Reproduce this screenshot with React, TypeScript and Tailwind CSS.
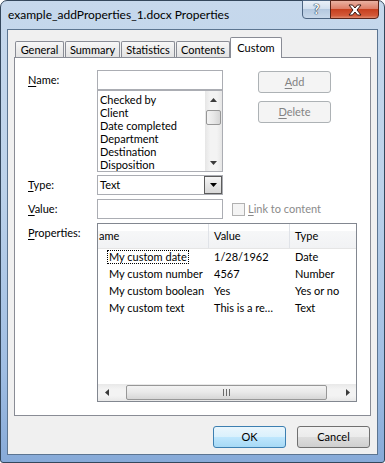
import React from "react";

// ---------- small bits ----------
function Mn({ c }: { c: string }) {
  return <span className="underline decoration-1 underline-offset-[2px]">{c}</span>;
}

function Label({ children }: { children: React.ReactNode }) {
  return <div className="w-[69px] shrink-0 pt-[2px] leading-[16px]">{children}</div>;
}

function UpArrow() {
  return (
    <svg width="7" height="4" viewBox="0 0 7 4">
      <path d="M0 4 L3.5 0 L7 4 Z" fill="#3b3b3b" />
    </svg>
  );
}

function DownArrow({ color = "#3b3b3b" }: { color?: string }) {
  return (
    <svg width="7" height="4" viewBox="0 0 7 4">
      <path d="M0 0 L7 0 L3.5 4 Z" fill={color} />
    </svg>
  );
}

function LeftArrow() {
  return (
    <svg width="4" height="7" viewBox="0 0 4 7">
      <path d="M4 0 L4 7 L0 3.5 Z" fill="#3b3b3b" />
    </svg>
  );
}

function RightArrow() {
  return (
    <svg width="4" height="7" viewBox="0 0 4 7">
      <path d="M0 0 L4 3.5 L0 7 Z" fill="#3b3b3b" />
    </svg>
  );
}

// ---------- title bar ----------
function TitleBar() {
  return (
    <div className="h-[28px] flex items-start justify-between">
      <div className="pl-[1px] pt-[6px] leading-[16px] text-[12px] text-black">
        example_addProperties_1.docx Properties
      </div>
      <div className="flex -mt-px -mr-px">
        <div className="w-[29px] h-[19px] rounded-bl-[4px] border border-[#4d6582] bg-[linear-gradient(180deg,#e9f0f8_0%,#d3e0ef_45%,#b4c8df_50%,#c8d8ea_100%)] flex items-center justify-center">
          <span className="font-bold text-[13px] leading-none text-white [text-shadow:0_0_1px_#22344a,0_0_1px_#22344a,0_0_1px_#22344a]">
            ?
          </span>
        </div>
        <div className="w-[49px] h-[19px] -ml-px rounded-br-[4px] border border-[#5a2419] bg-[linear-gradient(180deg,#eab1a2_0%,#de7f69_45%,#c7401f_50%,#d25838_85%,#e08a6e_100%)] flex items-center justify-center">
          <svg width="14" height="12" viewBox="0 0 14 12">
            <path
              d="M1 1 H4.5 L7 4 L9.5 1 H13 L9 6 L13 11 H9.5 L7 8 L4.5 11 H1 L5 6 Z"
              fill="#ffffff"
              stroke="#3a1a14"
              strokeWidth="1"
              strokeLinejoin="round"
            />
          </svg>
        </div>
      </div>
    </div>
  );
}

// ---------- tabs ----------
function Tabs() {
  const tab =
    "h-[16px] border-t border-l border-r border-[#898c95] bg-[linear-gradient(180deg,#f7f7f7_0%,#ececec_50%,#e3e3e3_100%)] flex items-center justify-center leading-[16px] rounded-t-[2px]";
  return (
    <div className="h-[20px] flex items-end pl-[1px]">
      <div className={`${tab} w-[49px]`}>General</div>
      <div className={`${tab} w-[55px] ml-[1px]`}>Summary</div>
      <div className={`${tab} w-[54px] ml-[1px]`}>Statistics</div>
      <div className={`${tab} w-[54px] ml-[1px]`}>Contents</div>
      <div className="relative z-10 w-[52px] h-[21px] -mb-px border-t border-l border-r border-[#898c95] bg-white rounded-t-[2px] flex items-start justify-center pt-[2px] leading-[16px]">
        Custom
      </div>
    </div>
  );
}

// ---------- list box with vertical scrollbar ----------
function ListBox() {
  const items = ["Checked by", "Client", "Date completed", "Department", "Destination", "Disposition"];
  return (
    <div className="h-[82px] border border-[#abadb3] flex bg-white">
      <div className="flex-1 pl-[2px] pt-[2px] leading-[13px] overflow-hidden">
        {items.map((it) => (
          <div key={it} className="h-[13px] whitespace-nowrap">
            {it}
          </div>
        ))}
      </div>
      <div className="w-[17px] flex flex-col bg-[linear-gradient(90deg,#e6e6e6_0%,#f3f3f3_30%,#f3f3f3_70%,#e6e6e6_100%)]">
        <div className="h-[17px] flex items-center justify-center">
          <UpArrow />
        </div>
        <div className="mx-[1px] mt-[2px] h-[15px] rounded-[2px] border border-[#979797] bg-[linear-gradient(90deg,#f3f3f3_0%,#e8e8e8_50%,#d6d6d6_100%)]" />
        <div className="flex-1" />
        <div className="h-[17px] flex items-center justify-center">
          <DownArrow />
        </div>
      </div>
    </div>
  );
}

function DisabledBtn({ mn, rest }: { mn: string; rest: string }) {
  return (
    <div className="w-[73px] h-[22px] rounded-[3px] border border-[#adb2b5] bg-[#f4f4f4] flex items-center justify-center text-[#838383] leading-[16px]">
      <span>
        <Mn c={mn} />
        {rest}
      </span>
    </div>
  );
}

// ---------- properties list view ----------
const rows = [
  { name: "My custom date", value: "1/28/1962", type: "Date" },
  { name: "My custom number", value: "4567", type: "Number" },
  { name: "My custom boolean", value: "Yes", type: "Yes or no" },
  { name: "My custom text", value: "This is a re\u2026", type: "Text" },
];

function ListView() {
  return (
    <div className="w-[260px] h-[179px] border border-[#828790] flex flex-col bg-white">
      <div className="h-[25px] flex border-b border-[#e5e5e5] bg-[linear-gradient(180deg,#ffffff_0%,#ffffff_30%,#f6f7f8_31%,#f1f2f4_100%)] leading-[16px]">
        <div className="w-[111px] border-r border-[#e0e3e8] pl-[1px] flex items-center">ame</div>
        <div className="w-[81px] border-r border-[#e0e3e8] pl-[5px] flex items-center">Value</div>
        <div className="flex-1 pl-[5px] flex items-center">Type</div>
      </div>
      <div className="flex-1">
        {rows.map((r, i) => (
          <div key={r.name} className="h-[17px] flex items-center whitespace-nowrap">
            <div className="w-[111px] pl-[9px]">
              <span
                className={`inline-block px-[1px] leading-[12px] border ${
                  i === 0 ? "border-dotted border-black" : "border-transparent"
                }`}
              >
                {r.name}
              </span>
            </div>
            <div className="w-[81px] pl-[5px]">{r.value}</div>
            <div className="flex-1 pl-[5px]">{r.type}</div>
          </div>
        ))}
      </div>
      <div className="h-[17px] flex bg-[linear-gradient(180deg,#e8e8e8_0%,#f3f3f3_30%,#f3f3f3_70%,#e8e8e8_100%)]">
        <div className="w-[17px] flex items-center justify-center">
          <LeftArrow />
        </div>
        <div className="flex-1 pl-[11px] py-[1px]">
          <div className="w-[201px] h-full rounded-[2px] border border-[#979797] bg-[linear-gradient(180deg,#f3f3f3_0%,#e8e8e8_50%,#d6d6d6_100%)] flex items-center justify-center">
            <svg width="7" height="7" viewBox="0 0 7 7">
              <path d="M0.5 0 V7 M3.5 0 V7 M6.5 0 V7" stroke="#6a6a6a" strokeWidth="1" />
            </svg>
          </div>
        </div>
        <div className="w-[17px] flex items-center justify-center">
          <RightArrow />
        </div>
      </div>
    </div>
  );
}

// ---------- panel ----------
function Panel() {
  const box = "w-[126px] h-[20px] border border-[#abadb3] bg-white";
  return (
    <div className="h-[359px] border border-[#898c95] bg-white pl-[13px] pt-[12px]">
      <div className="flex">
        <Label>
          <Mn c="N" />
          ame:
        </Label>
        <div className="w-[126px] flex flex-col">
          <div className={box} />
          <ListBox />
        </div>
        <div className="ml-[35px] pt-[1px] flex flex-col gap-[8px]">
          <DisabledBtn mn="A" rest="dd" />
          <DisabledBtn mn="D" rest="elete" />
        </div>
      </div>

      <div className="flex mt-[3px]">
        <Label>
          <Mn c="T" />
          ype:
        </Label>
        <div className={`${box} flex items-center`}>
          <div className="flex-1 pl-[2px] leading-[16px]">Text</div>
          <div className="w-[18px] h-[18px] border border-[#5c5c5c] bg-[linear-gradient(180deg,#f6f6f6_0%,#e6e6e6_50%,#d8d8d8_100%)] flex items-center justify-center">
            <DownArrow color="#000000" />
          </div>
        </div>
      </div>

      <div className="flex mt-[4px]">
        <Label>
          <Mn c="V" />
          alue:
        </Label>
        <div className={box} />
        <div className="ml-[9px] flex items-center">
          <div className="w-[13px] h-[13px] border border-[#b1b1b1] bg-[#f4f4f4]" />
          <span className="ml-[3px] text-[#8a8a8a] leading-[16px]">
            <Mn c="L" />
            ink to content
          </span>
        </div>
      </div>

      <div className="flex mt-[4px]">
        <Label>
          <Mn c="P" />
          roperties:
        </Label>
        <ListView />
      </div>
    </div>
  );
}

function Button({ children, primary }: { children: React.ReactNode; primary?: boolean }) {
  return (
    <div
      className={
        primary
          ? "w-[73px] h-[22px] rounded-[3px] border border-[#3c7fb1] bg-[linear-gradient(180deg,#eaf6fd_0%,#d9f0fc_50%,#bee6fd_51%,#a7d9f5_100%)] flex items-center justify-center leading-[16px]"
          : "w-[73px] h-[22px] rounded-[3px] border border-[#707070] bg-[linear-gradient(180deg,#f2f2f2_0%,#ebebeb_50%,#dddddd_51%,#cfcfcf_100%)] flex items-center justify-center leading-[16px]"
      }
    >
      {children}
    </div>
  );
}

export default function App() {
  return (
    <div className="w-[385px] h-[463px] bg-white font-['Lato',sans-serif] text-[11px] text-black">
      <div className="w-full h-full flex flex-col rounded-t-[7px] rounded-b-[3px] border border-[#34475c] bg-[linear-gradient(180deg,#c6d8ec_0%,#bcd2ea_40%,#a0bee3_80%,#87aad8_100%)] px-[6px] pb-[7px]">
        <TitleBar />
        <div className="flex-1 flex flex-col border border-[#5c7591] bg-[#f0f0f0] px-[6px] pt-[7px]">
          <Tabs />
          <Panel />
          <div className="flex justify-end gap-[11px] mt-[10px] pr-[1px]">
            <Button primary>OK</Button>
            <Button>Cancel</Button>
          </div>
        </div>
      </div>
    </div>
  );
}
